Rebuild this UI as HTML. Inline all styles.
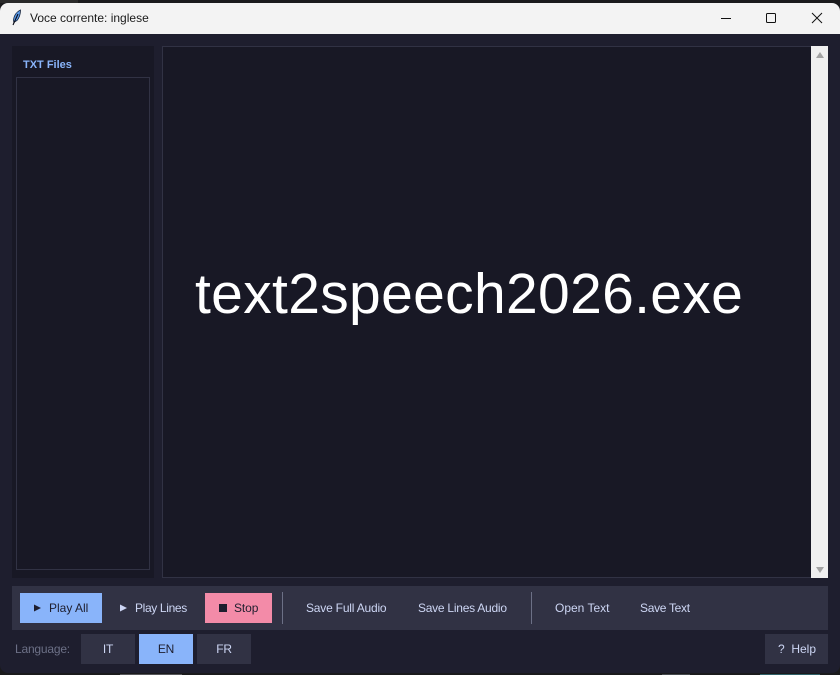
<!DOCTYPE html>
<html>
<head>
<meta charset="utf-8">
<style>
html,body{margin:0;padding:0;width:840px;height:675px;overflow:hidden;background:#1a1a1c;}
body{position:relative;font-family:"Liberation Sans",sans-serif;}
.a{position:absolute;}
#win{left:0;top:3px;width:840px;height:670px;background:#1e1e2e;border-radius:8px;overflow:hidden;}
#tb{left:0;top:3px;width:840px;height:31px;background:#f3f3f3;border-radius:8px 8px 0 0;}
.t{position:absolute;white-space:nowrap;line-height:16px;font-size:12px;color:#cdd6f4;letter-spacing:-.2px;}
.b{position:absolute;height:30px;}
.c{text-align:center;}
</style>
</head>
<body>
<div class="a" style="left:0;top:0;width:78px;height:3px;background:#2a2a2a"></div>
<div class="a" style="left:120px;top:674px;width:62px;height:1px;background:#55555a"></div>
<div class="a" style="left:662px;top:674px;width:28px;height:1px;background:#44484e"></div>
<div class="a" style="left:760px;top:674px;width:60px;height:1px;background:#2f5f68"></div>
<div class="a" id="win"></div>
<div class="a" id="tb"></div>
<svg class="a" style="left:10px;top:9px" width="13" height="18" viewBox="0 0 13 18">
<path d="M10.500 1C7 2.500 4 6 3.500 11L3.800 13.500L7 11.500C9.500 8.500 10.500 5 10.500 1Z" fill="#5b9bea" stroke="#10203a" stroke-width=".8"/>
<path d="M8 5L3 16" stroke="#0a0a14" stroke-width="1.1" fill="none"/>
</svg>
<div class="t" style="left:30px;top:10px;color:#1a1a1a;letter-spacing:0">Voce corrente: inglese</div>
<svg class="a" style="left:720px;top:10px" width="110" height="18" viewBox="0 0 110 18" fill="none" stroke="#111" stroke-width="1">
<path d="M1 8.500H11"/>
<rect x="46.500" y="3.500" width="9" height="9" rx="1"/>
<path d="M92 3L102 13M102 3L92 13"/>
</svg>

<div class="a" style="left:12px;top:46px;width:142px;height:532px;background:#181825"></div>
<div class="t" style="left:23px;top:57px;font-weight:bold;font-size:11px;color:#89b4fa;letter-spacing:0">TXT Files</div>
<div class="a" style="left:16px;top:77px;width:132px;height:491px;border:1px solid #313244;background:#181825"></div>

<div class="a" style="left:162px;top:46px;width:648px;height:530px;border:1px solid #313244;background:#181825"></div>
<div class="t" style="left:195px;top:262px;font-size:57px;line-height:64px;color:#fff;letter-spacing:.33px">text2speech2026.exe</div>

<div class="a" style="left:811px;top:46px;width:17px;height:532px;background:#f0f0f0"></div>
<svg class="a" style="left:811px;top:46px" width="17" height="532" viewBox="0 0 17 532" fill="#a3a3a3">
<path d="M5 12L9 6L13 12Z"/>
<path d="M5 521H13L9 527Z"/>
</svg>

<div class="a" style="left:12px;top:586px;width:816px;height:44px;background:#313244"></div>
<div class="b" style="left:20px;top:593px;width:82px;background:#89b4fa"></div>
<svg class="a" style="left:34px;top:604px" width="8" height="8"><path d="M0 0.500L7 4L0 7.500Z" fill="#1e1e2e"/></svg>
<div class="t" style="left:49px;top:600px;color:#1e1e2e;letter-spacing:0">Play All</div>
<svg class="a" style="left:120px;top:604px" width="8" height="8"><path d="M0 0.500L7 4L0 7.500Z" fill="#cdd6f4"/></svg>
<div class="t" style="left:135px;top:600px;letter-spacing:-.35px">Play Lines</div>
<div class="b" style="left:205px;top:593px;width:67px;background:#f38ba8"></div>
<div class="a" style="left:219px;top:604px;width:8px;height:8px;background:#1e1e2e"></div>
<div class="t" style="left:234px;top:600px;color:#1e1e2e;letter-spacing:-.1px">Stop</div>
<div class="a" style="left:282px;top:592px;width:1px;height:32px;background:#6c7086"></div>
<div class="t" style="left:306px;top:600px">Save Full Audio</div>
<div class="t" style="left:418px;top:600px;letter-spacing:-.25px">Save Lines Audio</div>
<div class="a" style="left:531px;top:592px;width:1px;height:32px;background:#6c7086"></div>
<div class="t" style="left:555px;top:600px;letter-spacing:0">Open Text</div>
<div class="t" style="left:640px;top:600px;letter-spacing:-.3px">Save Text</div>

<div class="t" style="left:15px;top:641px;color:#6c7086">Language:</div>
<div class="b c" style="left:81px;top:634px;width:54px;background:#313244"></div>
<div class="t c" style="left:81px;top:641px;width:54px">IT</div>
<div class="b c" style="left:139px;top:634px;width:54px;background:#89b4fa"></div>
<div class="t c" style="left:139px;top:641px;width:54px;color:#1e1e2e">EN</div>
<div class="b c" style="left:197px;top:634px;width:54px;background:#313244"></div>
<div class="t c" style="left:197px;top:641px;width:54px">FR</div>
<div class="b" style="left:765px;top:634px;width:63px;background:#313244"></div>
<div class="t" style="left:778px;top:641px;letter-spacing:0">?&nbsp; Help</div>
</body>
</html>
